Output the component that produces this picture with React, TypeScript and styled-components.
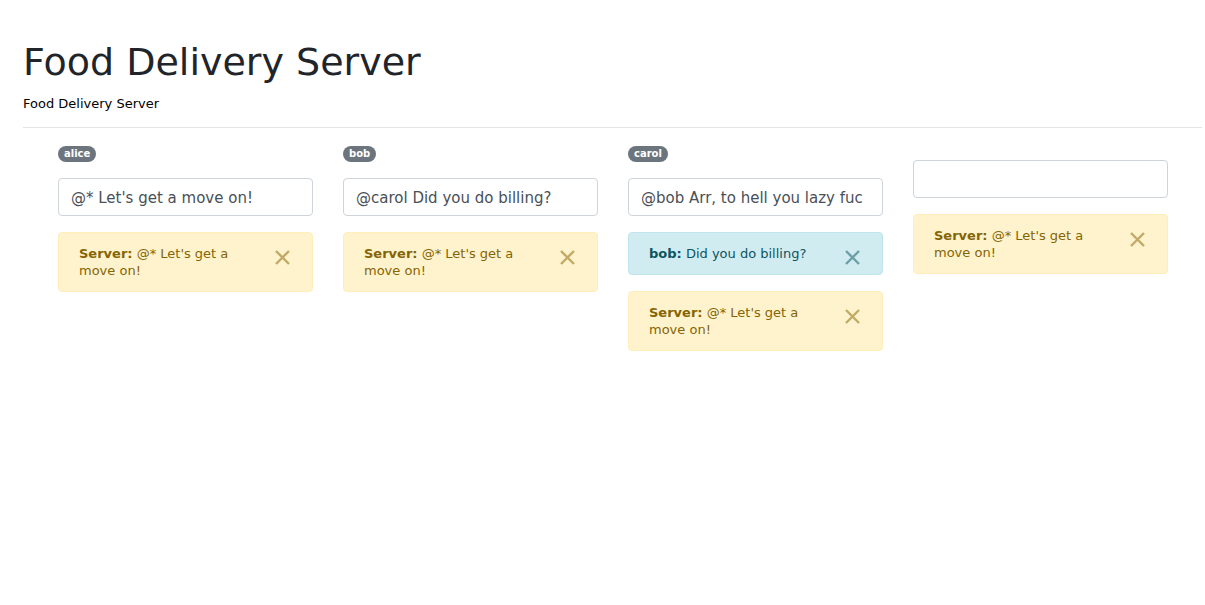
import React from 'react';
import styled, { createGlobalStyle } from 'styled-components';

const GlobalStyle = createGlobalStyle`
  body {
    margin: 0;
    background: #fff;
    color: #212529;
    font-family: 'DejaVu Sans', 'Liberation Sans', sans-serif;
  }
`;

type Variant = 'warning' | 'info';

interface Message {
  from: string;
  text: string;
  variant: Variant;
}

interface Client {
  name?: string;
  draft: string;
  messages: Message[];
}

const palette = {
  warning: { bg: '#fff3cd', border: '#ffeeba', color: '#856404' },
  info: { bg: '#d1ecf1', border: '#bee5eb', color: '#0c5460' },
};

const Page = styled.div`
  padding: 40px 3px 0 23px;
`;

const Title = styled.h1`
  margin: 0;
  font-size: 38px;
  font-weight: 400;
  line-height: 1.2;
  color: #212529;
`;

const Lead = styled.p`
  margin: 8px 0 0;
  font-size: 13px;
  line-height: 1.5;
  color: #000;
`;

const Rule = styled.hr`
  margin: 14px 0 16px;
  border: 0;
  border-top: 1px solid rgba(0, 0, 0, 0.1);
`;

const Clients = styled.div`
  display: grid;
  grid-template-columns: repeat(4, 255px);
  column-gap: 30px;
  margin-left: 35px;
  align-items: start;
`;

const Column = styled.section`
  display: flex;
  flex-direction: column;
`;

const BadgeRow = styled.div`
  height: 18px;
  display: flex;
  align-items: flex-end;
`;

const Badge = styled.span`
  display: inline-block;
  padding: 3px 6px;
  font-size: 10px;
  font-weight: 700;
  line-height: 1;
  color: #fff;
  background: #6c757d;
  border-radius: 10rem;
`;

const Input = styled.input`
  box-sizing: border-box;
  width: 100%;
  height: 38px;
  margin: 16px 0 16px;
  padding: 6px 12px 4px;
  font-family: 'DejaVu Sans', sans-serif;
  font-size: 15px;
  color: #495057;
  background: #fff;
  border: 1px solid #ced4da;
  border-radius: 4px;
  outline: none;
`;

const Alert = styled.div<{ $variant: Variant }>`
  position: relative;
  margin-bottom: 16px;
  padding: 12px 64px 12px 20px;
  font-size: 13px;
  line-height: 17px;
  color: ${({ $variant }) => palette[$variant].color};
  background: ${({ $variant }) => palette[$variant].bg};
  border: 1px solid ${({ $variant }) => palette[$variant].border};
  border-radius: 4px;
`;

const Sender = styled.strong`
  font-weight: 700;
`;

const Close = styled.button`
  position: absolute;
  top: 17px;
  right: 22px;
  padding: 0;
  border: 0;
  background: transparent;
  color: inherit;
  opacity: 0.5;
  line-height: 0;
  cursor: pointer;
`;

const CloseIcon = () => (
  <svg width="15" height="15" viewBox="0 0 15 15" aria-hidden="true">
    <path d="M1 1 L14 14 M14 1 L1 14" stroke="currentColor" strokeWidth="2.4" />
  </svg>
);

const serverMsg: Message = { from: 'Server', text: "@* Let's get a move on!", variant: 'warning' };

const clients: Client[] = [
  { name: 'alice', draft: "@* Let's get a move on!", messages: [serverMsg] },
  { name: 'bob', draft: '@carol Did you do billing?', messages: [serverMsg] },
  {
    name: 'carol',
    draft: '@bob Arr, to hell you lazy fuc',
    messages: [{ from: 'bob', text: 'Did you do billing?', variant: 'info' }, serverMsg],
  },
  { draft: '', messages: [serverMsg] },
];

const App: React.FC = () => (
  <>
    <GlobalStyle />
    <Page>
      <Title>Food Delivery Server</Title>
      <Lead>Food Delivery Server</Lead>
      <Rule />
      <Clients>
        {clients.map((client, i) => (
          <Column key={i}>
            {client.name && (
              <BadgeRow>
                <Badge>{client.name}</Badge>
              </BadgeRow>
            )}
            <Input readOnly value={client.draft} />
            {client.messages.map((msg, j) => (
              <Alert key={j} $variant={msg.variant}>
                <Sender>{msg.from}:</Sender> {msg.text}
                <Close aria-label="Close">
                  <CloseIcon />
                </Close>
              </Alert>
            ))}
          </Column>
        ))}
      </Clients>
    </Page>
  </>
);

export default App;
